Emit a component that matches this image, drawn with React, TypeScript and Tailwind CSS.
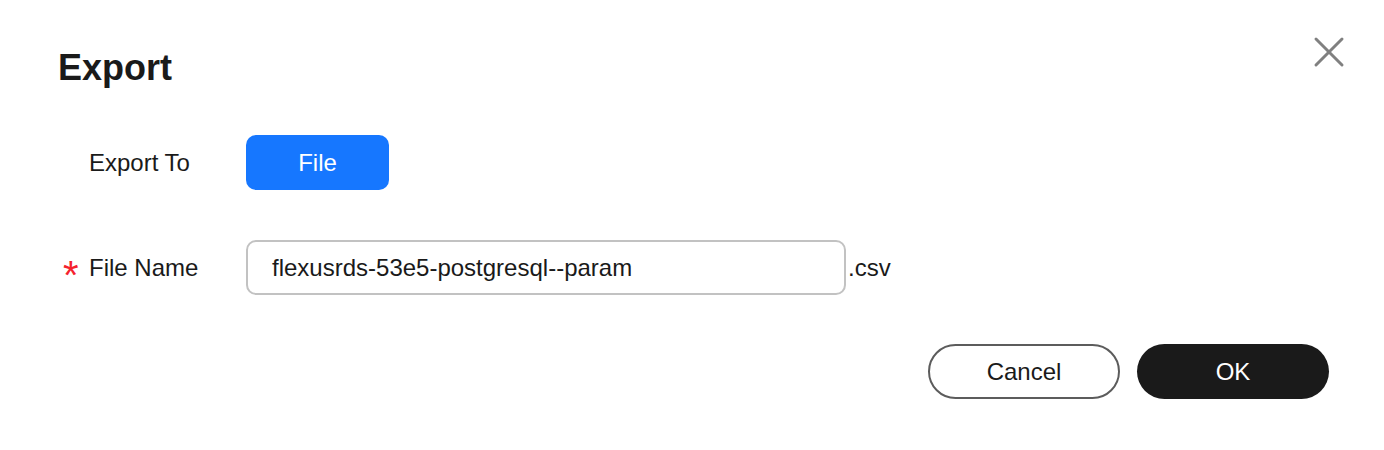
import React from 'react';

const CloseIcon = () => (
  <svg width="32" height="32" viewBox="0 0 32 32" fill="none" stroke="#808080" strokeWidth="3" strokeLinecap="round">
    <path d="M3 3L29 29" />
    <path d="M29 3L3 29" />
  </svg>
);

export default function App() {
  return (
    <div
      className="relative w-[1384px] h-[450px] bg-white text-[#1a1a1a]"
      style={{ fontFamily: '"Liberation Sans", Arial, sans-serif' }}
    >
      <button className="absolute left-[1313px] top-[36px] w-[32px] h-[32px] flex items-center justify-center">
        <CloseIcon />
      </button>

      <div className="pl-[58px] pr-[55px] pt-[46px]">
        <h1 className="text-[36px] leading-[44px] font-bold">Export</h1>

        <div className="mt-[45px] flex items-center h-[55px]">
          <div className="w-[188px] pl-[31px] text-[24px]">Export To</div>
          <button className="w-[143px] h-[55px] rounded-[10px] bg-[#1677ff] text-white text-[24px]">
            File
          </button>
        </div>

        <div className="mt-[50px] flex items-center h-[55px]">
          <div className="w-[188px] flex items-center text-[24px]">
            <span className="w-[31px] pl-[5px] text-[#f5222d] text-[40px] leading-[40px] translate-y-[7px]">*</span>
            <span>File Name</span>
          </div>
          <div className="w-[600px] h-[55px] rounded-[10px] border-2 border-[#c2c2c2] flex items-center px-[24px] text-[24px]">
            flexusrds-53e5-postgresql--param
          </div>
          <span className="ml-[2px] self-start pt-[10px] text-[24px]">.csv</span>
        </div>

        <div className="mt-[49px] flex justify-end gap-[17px]">
          <button className="w-[192px] h-[55px] rounded-full border-2 border-[#5c5c5c] text-[24px] bg-white">
            Cancel
          </button>
          <button className="w-[192px] h-[55px] rounded-full bg-[#1a1a1a] text-white text-[24px]">
            OK
          </button>
        </div>
      </div>
    </div>
  );
}
